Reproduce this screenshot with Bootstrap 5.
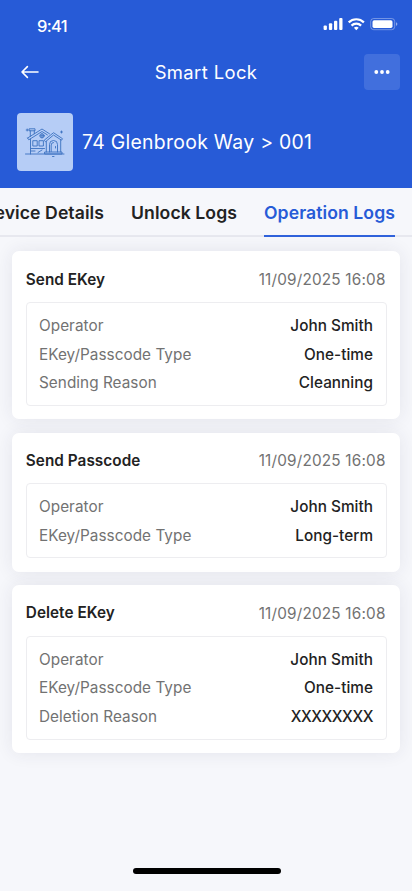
<!DOCTYPE html>
<html lang="en">
<head>
<meta charset="utf-8">
<meta name="viewport" content="width=device-width, initial-scale=1">
<title>Smart Lock</title>
<link href="https://cdn.jsdelivr.net/npm/bootstrap@5.3.0/dist/css/bootstrap.min.css" rel="stylesheet">
<style>
body{font-family:Inter,"Liberation Sans",sans-serif;background:#f6f7fb;color:#222;width:412px;height:891px;overflow:hidden}
.hero{background:#275bd7;height:188.4px}
.statusbar{height:52px;padding:0 14px 4px 37px}
.statusbar svg{margin-top:-1px}
.clock{font-size:16.5px;line-height:24px;font-weight:500;letter-spacing:-.7px;padding-top:3px}
.titlebar{height:39px;padding:0 12px 0 20px}
.titlebar h1{font-size:18.4px;font-weight:400;letter-spacing:.4px;padding-top:1px;margin-left:-8px}
.side{width:36px;margin-top:-2px}
.more-btn{width:36px;height:36px;border-radius:4px;background:#416fdd;border:0}
.property{height:57.5px;margin:22px 17px 0}
.thumb{width:56px;height:58px;border-radius:4px;background:#b6cdf6}
.property-name{font-size:19.4px;letter-spacing:.3px;margin-left:9px;line-height:24px;padding-top:1px}
.tabs{height:48.6px;border-bottom:2px solid #e7e8ef;padding-right:17px;gap:27px}
.tabs .nav-link{padding:12px 0 0;height:48.6px;line-height:26px;font-size:17.6px;font-weight:600;color:#222;letter-spacing:.08px;white-space:nowrap;border-bottom:2px solid transparent}
.tabs .nav-link.active{color:#275bd7;border-color:#3062db}
.log-list{padding:14.3px 12.4px 0;gap:13.2px}
.log{border:0;border-radius:7px;box-shadow:0 0 18px rgba(40,45,80,.09);padding:13px 13px 13.4px 13.4px}
.log-head{height:30px;margin-bottom:7.6px;padding:1px 1px 0 0}
.log-head h2{font-size:15.3px;font-weight:600;letter-spacing:.05px}
.log-head time{font-size:15.3px;color:#727272;letter-spacing:.2px;padding-top:1px}
.details{border:1px solid #ededf0;border-radius:4px;padding:9.2px 12.6px 6.8px 12.2px;font-size:15.3px}
.details>div{height:28.7px}
.details dt{font-weight:400;color:#727272;letter-spacing:.05px}
.details dd{font-weight:480;letter-spacing:.04px}
.details .masked{letter-spacing:-.42px}
.home-bar{left:132.5px;bottom:17.5px;width:148px;height:6px;border-radius:3px;background:#000}
</style>
</head>
<body>
<header class="hero text-white">
 <div class="statusbar d-flex justify-content-between align-items-center">
  <span class="clock">9:41</span>
  <svg width="76" height="14" viewBox="322 17 76 14" fill="#fff">
   <rect x="323.6" y="25.5" width="3.3" height="4.6" rx="1"/><rect x="328.9" y="23.3" width="3.3" height="6.8" rx="1"/><rect x="334" y="20.7" width="3.3" height="9.4" rx="1"/><rect x="339.2" y="18.1" width="3.3" height="12" rx="1"/>
   <g fill="none" stroke="#fff" stroke-width="2.2"><path d="M348.7 22.4a10.8 10.8 0 0 1 15.2 0M351.5 25.6a6.8 6.8 0 0 1 9.6 0"/></g><path d="M353.9 27.8a3.5 3.5 0 0 1 4.8 0l-2.4 2.4z"/>
   <rect x="370.7" y="18.5" width="24" height="11.2" rx="3" fill="none" stroke="#fff" stroke-opacity=".35"/><rect x="372.5" y="20.3" width="20" height="7.6" rx="1.6"/><path d="M396 22.3q1.4.6 1.4 1.8t-1.4 1.8z" opacity=".5"/>
  </svg>
 </div>
 <div class="titlebar d-flex justify-content-between align-items-center">
  <div class="side"><svg width="20" height="14" viewBox="0 0 20 14" fill="none" stroke="#fff" stroke-width="1.6" stroke-linecap="round" stroke-linejoin="round"><path d="M18 7H2M7.4 1.6L2 7L7.4 12.4"/></svg></div>
  <h1 class="mb-0">Smart Lock</h1>
  <button class="more-btn p-0 d-flex align-items-center justify-content-center" aria-label="More"><svg width="18" height="6" fill="#fff"><circle cx="3.3" cy="3" r="1.9"/><circle cx="9" cy="3" r="1.9"/><circle cx="14.7" cy="3" r="1.9"/></svg></button>
 </div>
 <div class="property d-flex align-items-center">
  <div class="thumb flex-shrink-0 d-flex align-items-center justify-content-center">
   <svg width="40" height="32" viewBox="25 125.5 40 32" fill="none" stroke="#3a70bf" stroke-width=".9" stroke-linejoin="round" stroke-linecap="round">
    <path d="M25.5 153.5H64M29.5 128.3h5.5v2h-5.5zM30.3 130.3v5.7M34.3 130.3v2.9M26.2 129.5h2M27.2 128.5v2M27.6 137.5L42 128.5l7.5 4.8M27.6 137.5l1.2 1.8L42 131l5.4 3.4M30.5 138.5V153.5M31 148h13.5M31 150.5h4M38 152l4-2.5M33.2 140.2h4v5.3h-4zM39.4 140.2h4v5.3h-4zM44.5 139.5l9-7.3 9 6-1 1.5-8-5.2-7.7 6.5zM46.3 141v10.5M60.7 139.5v12M49.5 151.5v-7.5q0-4 4-4t4 4v7.5M51.2 151v-6.5q0-2.5 2.3-2.5M55.5 146v1.5M45 151.5h17v2H45zM52.5 156h1.5M60.5 131.5h2M61.5 130.5v2"/>
    <circle cx="42" cy="135.3" r="2.1"/><path d="M40 135.3h4M42 133.3v4"/>
   </svg>
  </div>
  <div class="property-name">74 Glenbrook Way &gt; 001</div>
 </div>
</header>
<nav class="tabs nav flex-nowrap justify-content-end">
 <a class="nav-link" href="#">Device Details</a><a class="nav-link" href="#">Unlock Logs</a><a class="nav-link active" href="#">Operation Logs</a>
</nav>
<main class="log-list d-flex flex-column">
 <article class="log card">
  <div class="log-head d-flex justify-content-between align-items-center"><h2 class="m-0">Send EKey</h2><time>11/09/2025 16:08</time></div>
  <dl class="details m-0">
   <div class="d-flex justify-content-between align-items-center"><dt>Operator</dt><dd class="m-0">John Smith</dd></div>
   <div class="d-flex justify-content-between align-items-center"><dt>EKey/Passcode Type</dt><dd class="m-0">One-time</dd></div>
   <div class="d-flex justify-content-between align-items-center"><dt>Sending Reason</dt><dd class="m-0">Cleanning</dd></div>
  </dl>
 </article>
 <article class="log card">
  <div class="log-head d-flex justify-content-between align-items-center"><h2 class="m-0">Send Passcode</h2><time>11/09/2025 16:08</time></div>
  <dl class="details m-0">
   <div class="d-flex justify-content-between align-items-center"><dt>Operator</dt><dd class="m-0">John Smith</dd></div>
   <div class="d-flex justify-content-between align-items-center"><dt>EKey/Passcode Type</dt><dd class="m-0">Long-term</dd></div>
  </dl>
 </article>
 <article class="log card">
  <div class="log-head d-flex justify-content-between align-items-center"><h2 class="m-0">Delete EKey</h2><time>11/09/2025 16:08</time></div>
  <dl class="details m-0">
   <div class="d-flex justify-content-between align-items-center"><dt>Operator</dt><dd class="m-0">John Smith</dd></div>
   <div class="d-flex justify-content-between align-items-center"><dt>EKey/Passcode Type</dt><dd class="m-0">One-time</dd></div>
   <div class="d-flex justify-content-between align-items-center"><dt>Deletion Reason</dt><dd class="masked m-0">XXXXXXXX</dd></div>
  </dl>
 </article>
</main>
<div class="home-bar position-fixed"></div>
<script src="https://cdn.jsdelivr.net/npm/bootstrap@5.3.0/dist/js/bootstrap.bundle.min.js"></script>
</body>
</html>
